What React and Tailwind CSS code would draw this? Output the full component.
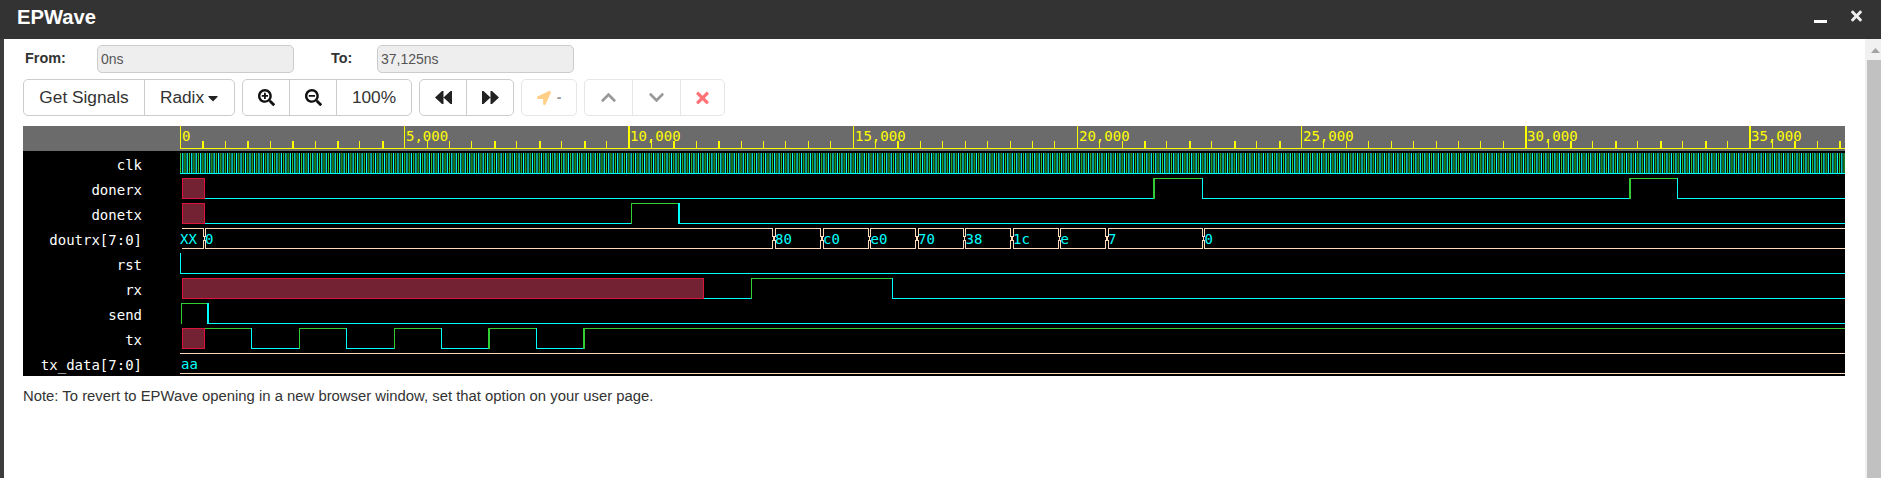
import React from "react";
import {
  FaCaretDown,
  FaChevronDown,
  FaChevronUp,
  FaLocationArrow,
  FaSearchMinus,
  FaSearchPlus,
  FaTimes,
} from "react-icons/fa";

const PLOT_LEFT = 180;
const PLOT_RIGHT = 1845;
const TICK_STEP = 22.42;
const GREEN = "#32cd32";
const CYAN = "#00ffff";
const PEACH = "#ffdab9";

// ticks that landed on two device pixels in the original canvas
const boldTicks = new Set([
  1, 3, 5, 7, 9, 14, 16, 18, 20, 22, 24, 32, 43, 45, 47, 49, 60, 62, 64, 66, 68, 70, 72, 74,
]);

const names = ["clk", "donerx", "donetx", "doutrx[7:0]", "rst", "rx", "send", "tx", "tx_data[7:0]"];

// [from, to, level] per row; whole x values are drawn as 2px edges
const digital = [
  {
    row: 1,
    segs: [[182, 205, "x"], [205, 1154, "l"], [1154, 1202.5, "h"], [1202.5, 1630, "l"], [1630, 1677.5, "h"], [1677.5, PLOT_RIGHT, "l"]],
  },
  {
    row: 2,
    segs: [[182, 205, "x"], [205, 631.5, "l"], [631.5, 679, "h"], [679, PLOT_RIGHT, "l"]],
  },
  { row: 4, segs: [[180.5, PLOT_RIGHT, "l"]] },
  {
    row: 5,
    segs: [[182, 704, "x"], [704, 751.5, "l"], [751.5, 892.5, "h"], [892.5, PLOT_RIGHT, "l"]],
  },
  { row: 6, segs: [[181.5, 208, "h"], [208, PLOT_RIGHT, "l"]] },
  {
    row: 7,
    segs: [
      [182, 205, "x"], [205, 251.5, "h"], [251.5, 299.5, "l"], [299.5, 346.5, "h"], [346.5, 394.5, "l"],
      [394.5, 441.5, "h"], [441.5, 489, "l"], [489, 536.5, "h"], [536.5, 584, "l"], [584, PLOT_RIGHT, "h"],
    ],
  },
];

const doutrx = [
  [204, 774, "0"], [774, 822, "80"], [822, 869.5, "c0"], [869.5, 917, "e0"], [917, 964.5, "70"],
  [964.5, 1012, "38"], [1012, 1059.5, "1c"], [1059.5, 1107, "e"], [1107, 1203.5, "7"], [1203.5, PLOT_RIGHT + 4, "0"],
];

const rowTop = (row) => 153 + row * 25;

function busPath(a, b, top) {
  const x0 = Math.floor(a) + 1.5;
  const x1 = Math.ceil(b) - 1.5;
  const bot = top + 20;
  return (
    `M${x1} ${top}.5H${x0}V${top + 7}.5L${x0 - 1} ${top + 9}.5V${top + 11}.5L${x0} ${top + 13}.5V${bot}.5` +
    `H${x1}V${top + 13}.5L${x1 + 1} ${top + 11}.5V${top + 9}.5L${x1} ${top + 7}.5Z`
  );
}

function ClockRow() {
  const top = rowTop(0);
  const rise = [];
  const fall = [];
  for (let t = 0; t < 37125; t += 100) {
    const x = PLOT_LEFT + t * (TICK_STEP / 500);
    rise.push(`M${x + 0.5} ${top}V${top + 20}`);
    fall.push(`M${x + 2.75} ${top}V${top + 20}`);
  }
  return (
    <g>
      <path d={rise.join("")} stroke={GREEN} strokeWidth="1.1" fill="none" />
      <path d={fall.join("")} stroke={CYAN} strokeWidth="1.2" fill="none" />
      <path d={`M${PLOT_LEFT} ${top + 20.5}H${PLOT_RIGHT}`} stroke={CYAN} fill="none" />
    </g>
  );
}

function DigitalRow({ row, segs }) {
  const top = rowTop(row);
  return (
    <g shapeRendering="crispEdges">
      {segs.map(([a, b, level], i) => {
        if (level === "x") {
          return (
            <rect key={i} x={a + 0.5} y={top + 0.5} width={b - a - 1} height="20" fill="#722233" stroke="#dc143c" />
          );
        }
        const prev = segs[i - 1];
        const y = level === "h" ? top + 0.5 : top + 20.5;
        const color = level === "h" ? GREEN : CYAN;
        return (
          <g key={i}>
            <path d={`M${a} ${y}H${b}`} stroke={color} fill="none" />
            {!(prev && prev[2] === "x") && (
              <path
                d={`M${a} ${top}V${top + 21}`}
                stroke={color}
                strokeWidth={Number.isInteger(a) ? 2 : 1}
                fill="none"
              />
            )}
          </g>
        );
      })}
    </g>
  );
}

function Waves() {
  const ticks = [];
  for (let k = 0; k * TICK_STEP < PLOT_RIGHT - PLOT_LEFT; k++) ticks.push(k);
  const busTop = rowTop(3);
  return (
    <svg
      width={PLOT_RIGHT - PLOT_LEFT}
      height="250"
      viewBox={`${PLOT_LEFT} 126 ${PLOT_RIGHT - PLOT_LEFT} 250`}
      className="block shrink-0 bg-black font-['DejaVu_Sans_Mono',monospace] text-[14px]"
    >
      <rect x={PLOT_LEFT} y="126" width={PLOT_RIGHT - PLOT_LEFT} height="25" fill="#6b6b6b" />
      <rect x={PLOT_LEFT} y="148" width={PLOT_RIGHT - PLOT_LEFT} height="1" fill="#ffff00" />
      {ticks.map((k) => {
        const major = k % 10 === 0;
        const w = boldTicks.has(k) ? 2 : 1;
        const x = Math.round(PLOT_LEFT + k * TICK_STEP);
        const y = major ? 126 : 141;
        return (
          <g key={k}>
            <rect x={x} y={y} width={w} height={148 - y} fill="#ffff00" />
            {major && (
              <text x={x + 2} y="141" fill="#ffff00">
                {(k * 500).toLocaleString("en-US")}
              </text>
            )}
          </g>
        );
      })}

      <ClockRow />
      {digital.map((d) => (
        <DigitalRow key={d.row} {...d} />
      ))}

      <g shapeRendering="crispEdges">
        {/* unknown value before the first edge has no left side */}
        <path
          d={`M182 ${busTop}.5H203.5V${busTop + 7}.5L204.500 ${busTop + 9}.5V${busTop + 11}.5L203.5 ${busTop + 13}.5V${busTop + 20}.5H182`}
          stroke={PEACH}
          fill="none"
        />
        {doutrx.map(([a, b], i) => (
          <path key={i} d={busPath(a, b, busTop)} stroke={PEACH} fill="none" />
        ))}
        <path d={`M${PLOT_LEFT} ${rowTop(8)}.5H${PLOT_RIGHT}M${PLOT_LEFT} ${rowTop(8) + 20}.5H${PLOT_RIGHT}`} stroke={PEACH} fill="none" />
      </g>
      <text x="180" y={busTop + 16} fill={CYAN}>
        XX
      </text>
      {doutrx.map(([a, , label], i) => (
        <text key={i} x={a + 1} y={busTop + 16} fill={CYAN}>
          {label}
        </text>
      ))}
      <text x="181" y={rowTop(8) + 16} fill={CYAN}>
        aa
      </text>
    </svg>
  );
}

function DoubleArrow({ flip }) {
  return (
    <svg width="17" height="13" viewBox="0 0 17 13" className={flip ? "-scale-x-100" : ""}>
      <path d="M0 6.5 7 0h1.5v13H7ZM8.5 6.5 15.5 0H17v13h-1.5Z" fill="#222" />
    </svg>
  );
}

function Group({ widths, dim, children }) {
  const items = React.Children.toArray(children);
  return (
    <div className={`flex h-[37px] rounded-[5px] border ${dim ? "border-[#e6e6e6]" : "border-[#ccc]"}`}>
      {items.map((item, i) => (
        <div
          key={i}
          style={{ width: widths[i] }}
          className={`flex items-center justify-center ${
            i < items.length - 1 ? (dim ? "border-r border-[#e6e6e6]" : "border-r border-[#ccc]") : ""
          }`}
        >
          {item}
        </div>
      ))}
    </div>
  );
}

export default function App() {
  return (
    <div className="flex h-[478px] w-[1881px] flex-col overflow-hidden bg-white font-['Liberation_Sans',Arial,sans-serif] text-[14.4px] text-[#333]">
      <div className="flex h-[39px] shrink-0 items-start justify-between bg-[#333] pl-[17px] text-white">
        <span className="mt-[4px] text-[20.2px] leading-[27px] font-bold">EPWave</span>
        <div className="flex items-start">
          <div className="mt-[20px] mr-[22px] h-[3px] w-[13px] bg-white" />
          <FaTimes className="mt-[8px] mr-[17px] h-[16px] w-[15px] text-[#eee]" />
        </div>
      </div>

      <div className="flex min-h-0 flex-1">
        <div className="w-[4px] shrink-0 bg-[#3c3c3c]" />
        <div className="min-w-0 flex-1 pl-[19px]">
          <div className="mt-[6px] flex h-[28px] items-center">
            <label className="w-[74px] pl-[2px] font-bold">From:</label>
            <input
              readOnly
              value="0ns"
              className="h-[28px] w-[197px] rounded-[5px] border border-[#ccc] bg-[#eee] px-[3px] text-[14px] text-[#555] outline-none"
            />
            <label className="box-content w-[46px] pl-[37px] font-bold">To:</label>
            <input
              readOnly
              value="37,125ns"
              className="h-[28px] w-[197px] rounded-[5px] border border-[#ccc] bg-[#eee] px-[3px] text-[14px] text-[#555] outline-none"
            />
          </div>

          <div className="mt-[6px] flex gap-[7px] text-[17.3px]">
            <Group widths={[121, 89]}>
              <span>Get Signals</span>
              <span className="flex items-center gap-[3px]">
                Radix <FaCaretDown className="h-[16px] w-[12px] text-[#222]" />
              </span>
            </Group>
            <Group widths={[47, 47, 74]}>
              <FaSearchPlus className="h-[17px] w-[17px] text-[#111]" />
              <FaSearchMinus className="h-[17px] w-[17px] text-[#111]" />
              <span>100%</span>
            </Group>
            <Group widths={[47, 46]}>
              <DoubleArrow />
              <DoubleArrow flip />
            </Group>
            <Group dim widths={[54]}>
              <span className="flex items-center gap-[6px] text-[#999]">
                <FaLocationArrow className="h-[14px] w-[14px] text-[#ffcf87]" />
                <span className="text-[14px] font-bold">-</span>
              </span>
            </Group>
            <Group dim widths={[48, 48, 43]}>
              <FaChevronUp className="h-[17px] w-[17px] text-[#999]" />
              <FaChevronDown className="h-[17px] w-[17px] text-[#999]" />
              <FaTimes className="h-[18px] w-[13px] text-[#ff7377]" />
            </Group>
          </div>

          <div className="mt-[10px] flex w-[1822px]">
            <div className="h-[250px] w-[157px] shrink-0 overflow-hidden bg-black font-['DejaVu_Sans_Mono',monospace] text-[14px] text-white">
              <div className="mb-[2px] h-[25px] bg-[#6b6b6b]" />
              {names.map((n) => (
                <div key={n} className="h-[25px] pr-[38px] text-right leading-[25px]">
                  {n}
                </div>
              ))}
            </div>
            <Waves />
          </div>

          <p className="mt-[11px] text-[14.85px] leading-[18px]">
            Note: To revert to EPWave opening in a new browser window, set that option on your user page.
          </p>
        </div>

        <div className="w-[16px] shrink-0 bg-[#f1f1f1] pt-[8px]">
          <svg width="16" height="13" viewBox="0 0 16 13" className="block">
            <path d="M6 6 10.500 1 15 6Z" fill="#a3a3a3" />
          </svg>
          <div className="ml-[2px] h-full bg-[#c1c1c1]" />
        </div>
      </div>
    </div>
  );
}
